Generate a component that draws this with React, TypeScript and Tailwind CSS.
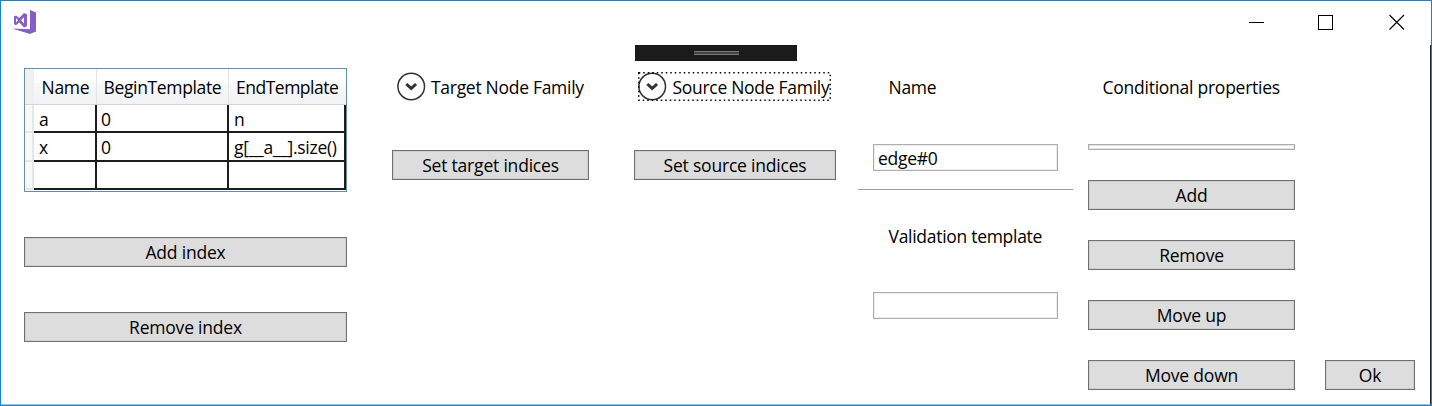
import React from "react";

const FONT = "font-['Open_Sans','Noto_Sans',sans-serif] text-[17.5px] leading-[24px] tracking-[-0.29px] text-black whitespace-nowrap";

function Btn({ children, className = "" }: { children: string; className?: string }) {
  return (
    <button className={`flex h-[30px] shrink-0 items-center justify-center border border-[#707070] bg-[#dddddd] p-0 tracking-[-0.2px] inset-shadow-[0_0_0_1px_#cfcfcf] ${className}`}>
      <span>{children}</span>
    </button>
  );
}

function Expander({ children, className, focused = false }: { children: string; className: string; focused?: boolean }) {
  return (
    <div className={`relative flex items-center ${className}`}>
      <svg width="29" height="29" viewBox="0 0 29 29" fill="none" className="shrink-0">
        <circle cx="14.2" cy="14.5" r="13.3" fill="white" stroke="#333" strokeWidth="1.5" />
        <path d="M9.3 12l4.9 4.4 4.9-4.4" stroke="#333" strokeWidth="3" />
      </svg>
      <span className="ml-[5.5px]">{children}</span>
      {focused && (
        <svg className="absolute inset-0 h-full w-full" fill="none" stroke="black" strokeWidth="1.5" strokeDasharray="1.5 3">
          <rect x="0.75" y="0.75" width="191.5" height="27.5" />
        </svg>
      )}
    </div>
  );
}

function Row({ cells, className }: { cells: string[]; className: string }) {
  return (
    <div className={`flex ${className}`}>
      <div className="w-[9px] border-b-2 border-r-2 border-[#e6e6e6] bg-[#fafafa]" />
      <div className="w-[63px] border-b-2 border-r-2 border-b-[#1c1c1c] border-r-[#1c1c1c] pl-[5px]">{cells[0]}</div>
      <div className="w-[132px] border-b-2 border-r-2 border-b-[#1c1c1c] border-r-[#1c1c1c] pl-[4px]">{cells[1]}</div>
      <div className="w-[117px] border-b-2 border-r-2 border-b-[#1c1c1c] border-r-[#1c1c1c] pl-[5px]">{cells[2]}</div>
    </div>
  );
}

export default function App() {
  return (
    <div className={`flex h-[406px] w-[1432px] flex-col border border-[#1a80d4] bg-white ${FONT}`}>
      <header className="flex h-[44px] shrink-0 items-start justify-between pl-[11px] pr-[26px]">
        <svg width="24" height="25" viewBox="0 0 24 25" className="mt-[8px]">
          <path d="M18 1l6 2.5v19L18 25 0 19.400l18 0.900z" fill="#865fc5" />
          <path fillRule="evenodd" d="M12 4l3 1.300v12L12 18.500 7.200 13.600 4 16.200l-2-1V7.400l2-1 3.200 2.600zm0 4.200L9 11.300l3 3.100zM4 9v4.600l2-2.300z" fill="#865fc5" />
        </svg>
        <svg width="156" height="16" viewBox="0 0 156 16" fill="none" stroke="black" className="mt-[13px]">
          <path d="M0 8.5h15M69.5 1.5h14v14h-14z" shapeRendering="crispEdges" />
          <path d="M140.500 1l14.500 14.500M155 1l-14.500 14.500" strokeWidth="1.1" />
        </svg>
      </header>
      <main className="flex min-h-0 flex-1 border-b border-r border-b-[#bbb] border-r-[#222]">
        <section className="ml-[23px] w-[323px] pt-[23px]">
          <div className="h-[124px] border border-[#688caf]">
            <div className="flex h-[36px] border-b border-[#d5d5d5] bg-linear-to-b from-white from-40% via-[#f7f8fa] via-41% to-[#f1f2f4]">
              <div className="w-[9px] bg-[#f0f0f0]" />
              <div className="w-[63px] border-r border-[#e2e4e6] pl-[7.5px] pt-[6px] tracking-[-0.3px]">Name</div>
              <div className="w-[132px] border-r border-[#e2e4e6] pl-[6.5px] pt-[6px] tracking-[-0.35px]">BeginTemplate</div>
              <div className="pl-[7px] pt-[6px] tracking-[-0.5px]">EndTemplate</div>
            </div>
            <Row cells={["a", "0", "n"]} className="h-[28px] leading-[28px]" />
            <Row cells={["x", "0", "g[__a__].size()"]} className="h-[29px] leading-[28px]" />
            <Row cells={["", "", ""]} className="h-[28px]" />
          </div>
          <Btn className="mt-[45px] w-full">Add index</Btn>
          <Btn className="mt-[45px] w-full">Remove index</Btn>
        </section>
        <section className="ml-[45px] w-[197px] pt-[27px]">
          <Expander className="ml-[4.500px] h-[29px]">Target Node Family</Expander>
          <Btn className="mt-[49px] w-full">Set target indices</Btn>
        </section>
        <section className="ml-[45px] w-[202px]">
          <div className="ml-px flex h-[16px] w-[162px] items-center justify-center bg-[#1b1b1b]">
            <div className="h-[4px] w-[45px] border-y border-[#777] bg-[#444]" />
          </div>
          <Expander focused className="ml-[4px] mt-[11px] h-[29px] w-[194px]">Source Node Family</Expander>
          <Btn className="mt-[49px] w-full">Set source indices</Btn>
        </section>
        <section className="ml-[22px] w-[215px] pt-[30px]">
          <div className="pl-[30.5px]">Name</div>
          <div className="ml-[15px] mt-[45px] h-[27px] w-[185px] border border-[#abadb3] pl-[4px] pt-px inset-shadow-[0_0_0_1px_#ededf0]">edge#0</div>
          <div className="mt-[18px] h-px bg-[#a0a0a0]" />
          <div className="mt-[34px] pl-[30.5px]">Validation template</div>
          <div className="ml-[15px] mt-[44px] h-[27px] w-[185px] border border-[#abadb3] inset-shadow-[0_0_0_1px_#ededf0]" />
        </section>
        <section className="ml-[15px] w-[207px] pt-[30px]">
          <div className="pl-[14.5px] tracking-[-0.25px]">Conditional properties</div>
          <div className="mt-[45px] h-[6px] border border-[#abadb3] inset-shadow-[0_0_0_1px_#e4e4e9]" />
          <div className="mt-[30px] flex flex-col gap-[30px]">
            <Btn>Add</Btn>
            <Btn>Remove</Btn>
            <Btn>Move up</Btn>
            <Btn>Move down</Btn>
          </div>
        </section>
        <Btn className="ml-[30px] mt-[315px] w-[90px]">Ok</Btn>
      </main>
    </div>
  );
}
